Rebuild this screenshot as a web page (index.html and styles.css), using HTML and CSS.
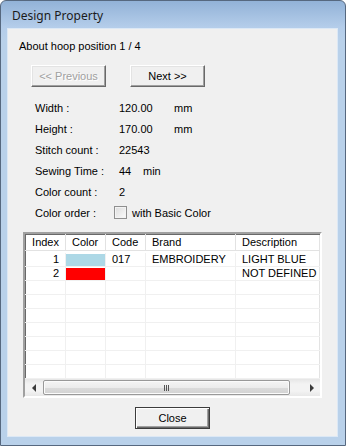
FILE: index.html
```html
<!DOCTYPE html>
<html lang="en">
<head>
    <meta charset="UTF-8">
    <meta name="viewport" content="width=device-width, initial-scale=1.0">
    <title>Design Property</title>
    <link rel="stylesheet" href="styles.css">
</head>
<body>
    <!-- Dialog Window -->
    <div class="window">
        <div class="titlebar">Design Property</div>

        <div class="client">
            <div class="hoop">About hoop position 1 / 4</div>

            <!-- Hoop navigation -->
            <div class="nav">
                <button class="btn" disabled>&lt;&lt; Previous</button>
                <button class="btn">Next &gt;&gt;</button>
            </div>

            <!-- Design info -->
            <div class="info">
                <div class="label">Width :</div>
                <div class="value"><span class="num">120.00</span>mm</div>
                <div class="label">Height :</div>
                <div class="value"><span class="num">170.00</span>mm</div>
                <div class="label">Stitch count :</div>
                <div class="value">22543</div>
                <div class="label">Sewing Time :</div>
                <div class="value"><span class="num short">44</span>min</div>
                <div class="label">Color count :</div>
                <div class="value">2</div>
                <div class="label">Color order :</div>
                <div class="value check-row"><span class="checkbox"></span>with Basic Color</div>
            </div>

            <!-- Color list -->
            <div class="list">
                <div class="lv-view">
                    <div class="lv-head">
                        <div class="hcell right">Index</div>
                        <div class="hcell">Color</div>
                        <div class="hcell">Code</div>
                        <div class="hcell">Brand</div>
                        <div class="hcell">Description</div>
                    </div>
                    <div class="lv-body">
                        <div class="lv-row">
                            <div class="cell right">1</div>
                            <div class="cell swatch-cell"><span class="swatch" style="background:#add8e6"></span></div>
                            <div class="cell">017</div>
                            <div class="cell">EMBROIDERY</div>
                            <div class="cell">LIGHT BLUE</div>
                        </div>
                        <div class="lv-row">
                            <div class="cell right">2</div>
                            <div class="cell swatch-cell"><span class="swatch" style="background:#ff0000"></span></div>
                            <div class="cell"></div>
                            <div class="cell"></div>
                            <div class="cell">NOT DEFINED</div>
                        </div>
                        <div class="lv-row"><div class="cell"></div><div class="cell"></div><div class="cell"></div><div class="cell"></div><div class="cell"></div></div>
                        <div class="lv-row"><div class="cell"></div><div class="cell"></div><div class="cell"></div><div class="cell"></div><div class="cell"></div></div>
                        <div class="lv-row"><div class="cell"></div><div class="cell"></div><div class="cell"></div><div class="cell"></div><div class="cell"></div></div>
                        <div class="lv-row"><div class="cell"></div><div class="cell"></div><div class="cell"></div><div class="cell"></div><div class="cell"></div></div>
                        <div class="lv-row"><div class="cell"></div><div class="cell"></div><div class="cell"></div><div class="cell"></div><div class="cell"></div></div>
                        <div class="lv-row"><div class="cell"></div><div class="cell"></div><div class="cell"></div><div class="cell"></div><div class="cell"></div></div>
                        <div class="lv-row"><div class="cell"></div><div class="cell"></div><div class="cell"></div><div class="cell"></div><div class="cell"></div></div>
                    </div>
                </div>

                <!-- Horizontal scrollbar -->
                <div class="hscroll">
                    <div class="arrow"><span class="tri left"></span></div>
                    <div class="track">
                        <div class="thumb"><span class="grip"></span></div>
                    </div>
                    <div class="arrow"><span class="tri right"></span></div>
                </div>
            </div>

            <button class="btn default close-btn">Close</button>
        </div>
    </div>
</body>
</html>
```

FILE: styles.css
```css
/* Basic Styling */
body {
    margin: 0;
    padding: 0;
    background-color: #ffffff;
    font-family: "Liberation Sans", Arial, sans-serif;
    font-size: 11px;
    color: #000;
}
/* Window Frame */
.window {
    box-sizing: border-box;
    width: 346px;
    height: 446px;
    border: 1px solid #56687f;
    border-radius: 6px 6px 0 0;
    padding: 0 8px 9px 7px;
    display: flex;
    flex-direction: column;
    background: linear-gradient(to bottom, #92b2d7 0px, #b4cdea 26px, #b9d1ea 40px, #b9d1ea 100%);
}
.titlebar {
    height: 28px;
    box-sizing: border-box;
    padding: 7px 0 0 4px;
    font-family: "Noto Sans", "Open Sans", sans-serif;
    font-size: 12px;
    line-height: 16px;
    color: #1b1b1b;
}
/* Client Area */
.client {
    flex: 1;
    background-color: #f0f0f0;
    box-shadow: 0 0 0 1px #dce8f5;
    padding-top: 11px;
    display: flex;
    flex-direction: column;
}
.hoop {
    margin-left: 11px;
    line-height: 13px;
}
.nav {
    display: flex;
    gap: 24px;
    margin: 12px 0 0 23px;
}
/* Push Buttons */
.btn {
    box-sizing: border-box;
    width: 75px;
    height: 22px;
    padding: 0;
    font-family: "Liberation Sans", Arial, sans-serif;
    font-size: 11px;
    color: #000;
    background-color: #f0f0f0;
    border: 1px solid;
    border-color: #ffffff #696969 #696969 #ffffff;
    box-shadow: inset -1px -1px 0 #a0a0a0, inset 1px 1px 0 #e3e3e3;
}
.btn:disabled {
    color: #a0a0a0;
    text-shadow: 1px 1px 0 #ffffff;
}
.btn.default {
    border: 1px solid #3c3c3c;
    box-shadow: inset 1px 1px 0 #ffffff, inset -1px -1px 0 #696969, inset -2px -2px 0 #a0a0a0;
}
.close-btn {
    align-self: center;
    margin-top: 9px;
}
/* Info Grid */
.info {
    display: grid;
    grid-template-columns: 84px auto;
    grid-auto-rows: 21px;
    align-items: center;
    margin: 10px 0 0 27px;
}
.num { display: inline-block; width: 55px; }
.num.short { width: 24px; }
.check-row { display: flex; align-items: center; }
.checkbox {
    box-sizing: border-box;
    width: 13px;
    height: 13px;
    margin: 0 5px 0 -5px;
    border: 1px solid #8f8f8f;
    background: linear-gradient(135deg, #dcdcdc, #fbfbfb);
    box-shadow: inset 0 0 0 1px #f3f3f3;
}
/* List View */
.list {
    box-sizing: border-box;
    height: 166px;
    margin: 9px 15px 0 15px;
    border: 2px solid;
    border-color: #a0a0a0 #ffffff #ffffff #a0a0a0;
    box-shadow: inset 1px 1px 0 #696969, inset -1px -1px 0 #e3e3e3;
    background-color: #ffffff;
    display: flex;
    flex-direction: column;
}
.lv-view {
    flex: 1;
    overflow: hidden;
}
.lv-head, .lv-row {
    display: grid;
    grid-template-columns: 41px 40px 40px 90px 100px;
    width: 311px;
}
.lv-head {
    height: 17px;
    box-sizing: border-box;
    border-bottom: 1px solid #e2e2e2;
}
.hcell {
    padding: 0 6px;
    line-height: 16px;
    border-right: 1px solid #e2e2e2;
    white-space: nowrap;
}
.lv-body { margin-top: 2px; }
.lv-row { height: 14px; }
.cell {
    padding: 0 6px;
    line-height: 13px;
    border-right: 1px solid #f0f0f0;
    border-bottom: 1px solid #f0f0f0;
    white-space: nowrap;
}
.right { text-align: right; }
.swatch-cell { padding: 1px 0 0 0; }
.swatch {
    display: block;
    height: 12px;
}
/* Scrollbar */
.hscroll {
    height: 17px;
    display: flex;
    background: linear-gradient(to bottom, #e6e6e6, #f3f3f3 30%, #f3f3f3 70%, #e8e8e8);
}
.arrow {
    width: 17px;
    display: flex;
    align-items: center;
    justify-content: center;
}
.tri {
    width: 0;
    height: 0;
    border-top: 4px solid transparent;
    border-bottom: 4px solid transparent;
}
.tri.left { border-right: 4px solid #3c3c3c; }
.tri.right { border-left: 4px solid #3c3c3c; }
.track {
    flex: 1;
    padding: 1px 0 1px 1px;
}
.thumb {
    box-sizing: border-box;
    width: 247px;
    height: 15px;
    border: 1px solid #999999;
    border-radius: 2px;
    background: linear-gradient(to bottom, #f5f5f5, #ececec 50%, #dcdcdc 51%, #d2d2d2);
    box-shadow: inset 0 0 0 1px #fbfbfb;
    display: flex;
    align-items: center;
    justify-content: center;
}
.grip {
    width: 5px;
    height: 6px;
    background: repeating-linear-gradient(to right, #555 0px, #555 1px, transparent 1px, transparent 2px);
}
```
